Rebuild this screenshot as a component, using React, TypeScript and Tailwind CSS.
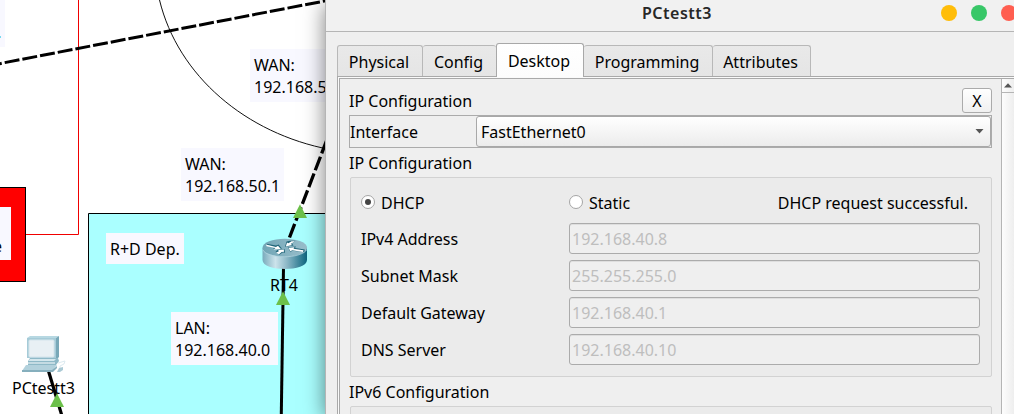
import React from "react";

const fields = [
  { label: "IPv4 Address", value: "192.168.40.8" },
  { label: "Subnet Mask", value: "255.255.255.0" },
  { label: "Default Gateway", value: "192.168.40.1" },
  { label: "DNS Server", value: "192.168.40.10" },
];

function Note({ className, children }: { className: string; children: React.ReactNode }) {
  return (
    <div className={"absolute whitespace-pre bg-[#f8f8ff] pt-[5px] pl-[4px] leading-[22px] " + className}>
      {children}
    </div>
  );
}

function Links() {
  return (
    <svg className="absolute inset-0" width="1014" height="414" viewBox="0 0 1014 414" fill="none">
      <path d="M78.5 0V234.5H26" stroke="#f00000" />
      <path d="M-1 187.500H25.500V281.500H-1Z" fill="#ff0000" stroke="#000" shapeRendering="crispEdges" />
      <path d="M88.500 414V213.500H340V430H88.500Z" fill="#aaffff" stroke="#000" />
      <path d="M159.500 0C178 76 246 133.500 330 149.500" stroke="#111" />
      <path d="M4.700 62.600L335 -1" stroke="#000" strokeWidth="3" strokeDasharray="15 3" />
      <path d="M-4 64.500L1.700 63.300" stroke="#000" strokeWidth="3" />
      <path d="M289.500 237.500L328 137" stroke="#000" strokeWidth="3.300" strokeDasharray="14.500 3.500" />
    </svg>
  );
}

function Devices() {
  return (
    <svg className="absolute inset-0" width="1014" height="414" viewBox="0 0 1014 414" fill="none">
      <defs>
        <linearGradient id="routerSide" x1="262" x2="307" y1="0" y2="0" gradientUnits="userSpaceOnUse">
          <stop offset="0" stopColor="#76a9ba" />
          <stop offset="0.3" stopColor="#cce3eb" />
          <stop offset="0.55" stopColor="#8db8c7" />
          <stop offset="1" stopColor="#0c6680" />
        </linearGradient>
        <linearGradient id="routerTop" x1="262" x2="307" y1="0" y2="0" gradientUnits="userSpaceOnUse">
          <stop offset="0" stopColor="#70a5b5" />
          <stop offset="1" stopColor="#9abfcc" />
        </linearGradient>
      </defs>
      <path d="M283.500 267L281.300 414" stroke="#000" strokeWidth="3" />
      <path d="M48.500 371L62 416" stroke="#000" strokeWidth="3.200" />

      <path d="M262.500 248V260C262.500 272 307 272 307 260V248Z" fill="url(#routerSide)" />
      <ellipse cx="284.800" cy="247.700" rx="22.300" ry="9" fill="url(#routerTop)" />
      <path d="M263 250C267 259 301 259 306.500 250" stroke="#b3d5df" strokeWidth=".7" />
      <g fill="#1f6478">
        <path d="M266.500 243.800L276 245.600L278.500 244.400L282 248.800L273 249L275 247.300L266.500 245.500Z" />
        <path d="M285 246.800L286.500 241.500L290 240.800L295.500 240.800L292 243.500L293.500 245.500Z" />
        <path d="M288 247.300L296 246.500L295 248L304.800 249.500L304.300 252L292 250.800L290.500 252.200Z" />
        <path d="M275.500 252L277.500 249.700L284.500 248.900L285 252.700L282.500 252.500L279.500 254.800Z" />
      </g>
      <g fill="#fff">
        <path d="M266 244.600L276 246.900L278 245.700L280.800 248.900L273.500 249.500L275.500 248.100L266.500 246.200Z" />
        <path d="M285.800 246.400L287 242.500L288.400 243.300L291.500 241.200H295L290.700 243.900L292.300 245Z" />
        <path d="M288.500 247.700L294.500 247.300L293.500 248.700L303.500 250.300L303 251.900L292 250.200L290.500 251.400Z" />
        <path d="M276 252.700L279.200 250.900L277.700 250.100L284 249.500L283.700 252.200L282 251.700L279 254.200Z" />
      </g>

      <path d="M27 338L30 336H59L56 338Z" fill="#b7d8e2" />
      <path d="M56 338L59 336V357L56 360Z" fill="#78a8b8" />
      <path d="M27 338H56V358H27Z" fill="#a6cbd8" />
      <rect x="29" y="340" width="25" height="17" rx="1" fill="#e8f0f4" stroke="#d4e4eb" />
      <path d="M30 358H58L59 361L56 365H28V361Z" fill="#8eb9c7" />
      <path d="M30 359H56L54 361H28Z" fill="#d4e7ed" />
      <path d="M28 362H55V364H28Z" fill="#c4dbe3" />
      <path d="M26 365H57L52 371H22Z" fill="#b2d1dc" />
      <path d="M22 370L52 370L57 366V368L53 372H22Z" fill="#86afbd" />
      <path d="M58 363L65 361L64 364L60 366V369" stroke="#dceaf0" />
      <path d="M59 368L63 367L63 370L60 372H57Z" fill="#aac9d4" />
    </svg>
  );
}

function Arrows() {
  return (
    <svg className="absolute inset-0" width="1014" height="414" viewBox="0 0 1014 414" fill="#6cc04a">
      <path d="M300 204.300L307 218H293Z" />
      <path d="M283 291.300L290 305H276Z" />
      <path d="M57 393.300L64 407H50Z" />
    </svg>
  );
}

function Tab({ children, className }: { children: React.ReactNode; className: string }) {
  return (
    <div
      className={
        "flex h-[31px] items-center justify-center rounded-t-[3px] border-t border-r border-[#b8b8b8] bg-linear-to-b from-[#e9e9e9] to-[#e5e5e5] pt-[2px] pr-[2px] " +
        className
      }
    >
      {children}
    </div>
  );
}

function Radio({ label, checked }: { label: string; checked?: boolean }) {
  return (
    <div className="flex items-center gap-[6px]">
      <span className="relative -top-px flex size-[14px] items-center justify-center rounded-full border border-[#a5a5a5] bg-white">
        {checked && <span className="size-[6px] rounded-full bg-[#444444]" />}
      </span>
      <span>{label}</span>
    </div>
  );
}

function ConfigWindow() {
  return (
    <section className="absolute top-0 left-[325px] flex h-[414px] w-[689px] flex-col border-l border-[#b5b5b5] bg-[#efefef] shadow-[0_4px_20px_rgba(0,0,0,0.5)]">
      <header className="relative flex h-[32px] shrink-0 items-center justify-end gap-[14px] border-b border-[#b5b5b5] bg-[#f1f1f1] pb-[5px]">
        <h1 className="absolute top-[2px] left-[316px] text-[16px] leading-[22px] font-semibold tracking-[0.5px] text-[#272727]">PCtestt3</h1>
        <span className="size-4 shrink-0 rounded-full bg-[#ffbd09]" />
        <span className="size-4 shrink-0 rounded-full bg-[#38c768]" />
        <span className="-mr-[3px] size-4 shrink-0 rounded-full bg-[#ff5e50]" />
      </header>

      <nav className="flex h-[44px] shrink-0 items-end pl-[11px]">
        <Tab className="w-[86px] border-l">Physical</Tab>
        <Tab className="w-[73px] border-r-0">Config</Tab>
        <div className="z-10 -mb-px flex h-[34px] w-[88px] items-center justify-center rounded-t-[3px] border border-b-0 border-[#a8a8a8] bg-linear-to-b from-white to-[#fcfcfc] pt-[1px] pr-[2px]">
          Desktop
        </div>
        <Tab className="w-[129px]">Programming</Tab>
        <Tab className="w-[98px]">Attributes</Tab>
      </nav>

      <div className="ml-[11px] flex min-h-0 flex-1 border-t border-l border-[#a9a9a9] bg-[#fafafa] pt-px pl-px">
        <div className="flex min-w-0 flex-1 border-t border-l border-[#a9a9a9] bg-[#efefef]">
          <main className="w-[661px] shrink-0 pl-[9px]">
            <div className="flex h-[36px] w-[643px] items-start justify-between pt-[9px]">
              <h2 className="pt-[2px] leading-[22px]">IP Configuration</h2>
              <button className="flex h-[25px] w-[30px] items-center justify-center rounded-[3px] border border-[#ababab] bg-linear-to-b from-white to-[#f0f0f0] pt-px">
                X
              </button>
            </div>
            <div className="flex h-[33px] w-[643px] items-center border border-[#ababab]">
              <span className="w-[126px]">Interface</span>
              <div className="flex h-[31px] flex-1 items-center justify-between rounded-[3px] border border-[#a8a8a8] bg-linear-to-b from-white to-[#ececec] pr-[6px] pl-[4px]">
                <span>FastEthernet0</span>
                <svg width="9" height="5" viewBox="0 0 9 5" fill="#555">
                  <path d="M.5 0H8.500L4.500 4.500Z" />
                </svg>
              </div>
            </div>
            <h2 className="flex h-[29px] items-center pt-px">IP Configuration</h2>
            <div className="ml-px h-[200px] w-[642px] rounded-[2px] border border-[#d2d2d2] bg-[#ebebeb] pt-[14px] pl-[10px]">
              <div className="flex h-[22px] w-[619px] items-center">
                <div className="w-[208px]">
                  <Radio label="DHCP" checked />
                </div>
                <Radio label="Static" />
                <span className="ml-auto pr-[12px]">DHCP request successful.</span>
              </div>
              <div className="mt-[9px] flex flex-col gap-[6px]">
                {fields.map((field) => (
                  <div key={field.label} className="flex h-[31px] items-center">
                    <span className="w-[208px] pt-px">{field.label}</span>
                    <div className="flex h-[31px] w-[411px] items-center rounded-[3px] border border-[#ababab] bg-[#efefef] pt-px pl-[2px] text-[#bebebe] shadow-[inset_0_1px_0_#dedede]">
                      {field.value}
                    </div>
                  </div>
                ))}
              </div>
            </div>
            <h2 className="flex h-[29px] items-center pt-px">IPv6 Configuration</h2>
            <div className="ml-px h-[20px] w-[642px] rounded-t-[2px] border border-[#d2d2d2] bg-[#ebebeb]" />
          </main>
          <aside className="flex flex-1 flex-col border-l border-[#b5b5b5] bg-linear-to-r from-[#fdfdfd] to-[#eeeeee]">
            <div className="flex h-[14px] items-center border-b border-[#b5b5b5] pl-[2px]">
              <svg width="8" height="5" viewBox="0 0 8 5" fill="#555">
                <path d="M0 4.500H8L4 .3Z" />
              </svg>
            </div>
          </aside>
        </div>
      </div>
    </section>
  );
}

export default function App() {
  return (
    <div className="relative h-[414px] w-[1014px] overflow-hidden bg-white font-['Noto_Sans',sans-serif] text-[16px] leading-[22px] text-black">
      <Links />
      <div className="absolute top-0 left-0 h-[47px] w-[5px] bg-[#f8f8ff]" />
      <div className="absolute top-[36px] left-0 h-[2px] w-px bg-[#78d8ee]" />
      <div className="absolute top-[207px] left-0 flex h-[53px] w-[11px] items-end justify-end bg-[#f8f8ff] pr-[9px] pb-[3px]">e</div>
      <Note className="top-[49px] left-[250px] h-[53px] w-[103px]">{"WAN:\n192.168.50.2"}</Note>
      <Note className="top-[148px] left-[181px] h-[53px] w-[103px]">{"WAN:\n192.168.50.1"}</Note>
      <Note className="top-[233px] left-[106px] h-[31px] w-[78px]">R+D Dep.</Note>
      <Note className="top-[312px] left-[171px] h-[53px] w-[107px]">{"LAN:\n192.168.40.0"}</Note>
      <Devices />
      <span className="absolute top-[274px] left-[270px]">RT4</span>
      <span className="absolute top-[377px] left-[12px]">PCtestt3</span>
      <Arrows />
      <ConfigWindow />
    </div>
  );
}
